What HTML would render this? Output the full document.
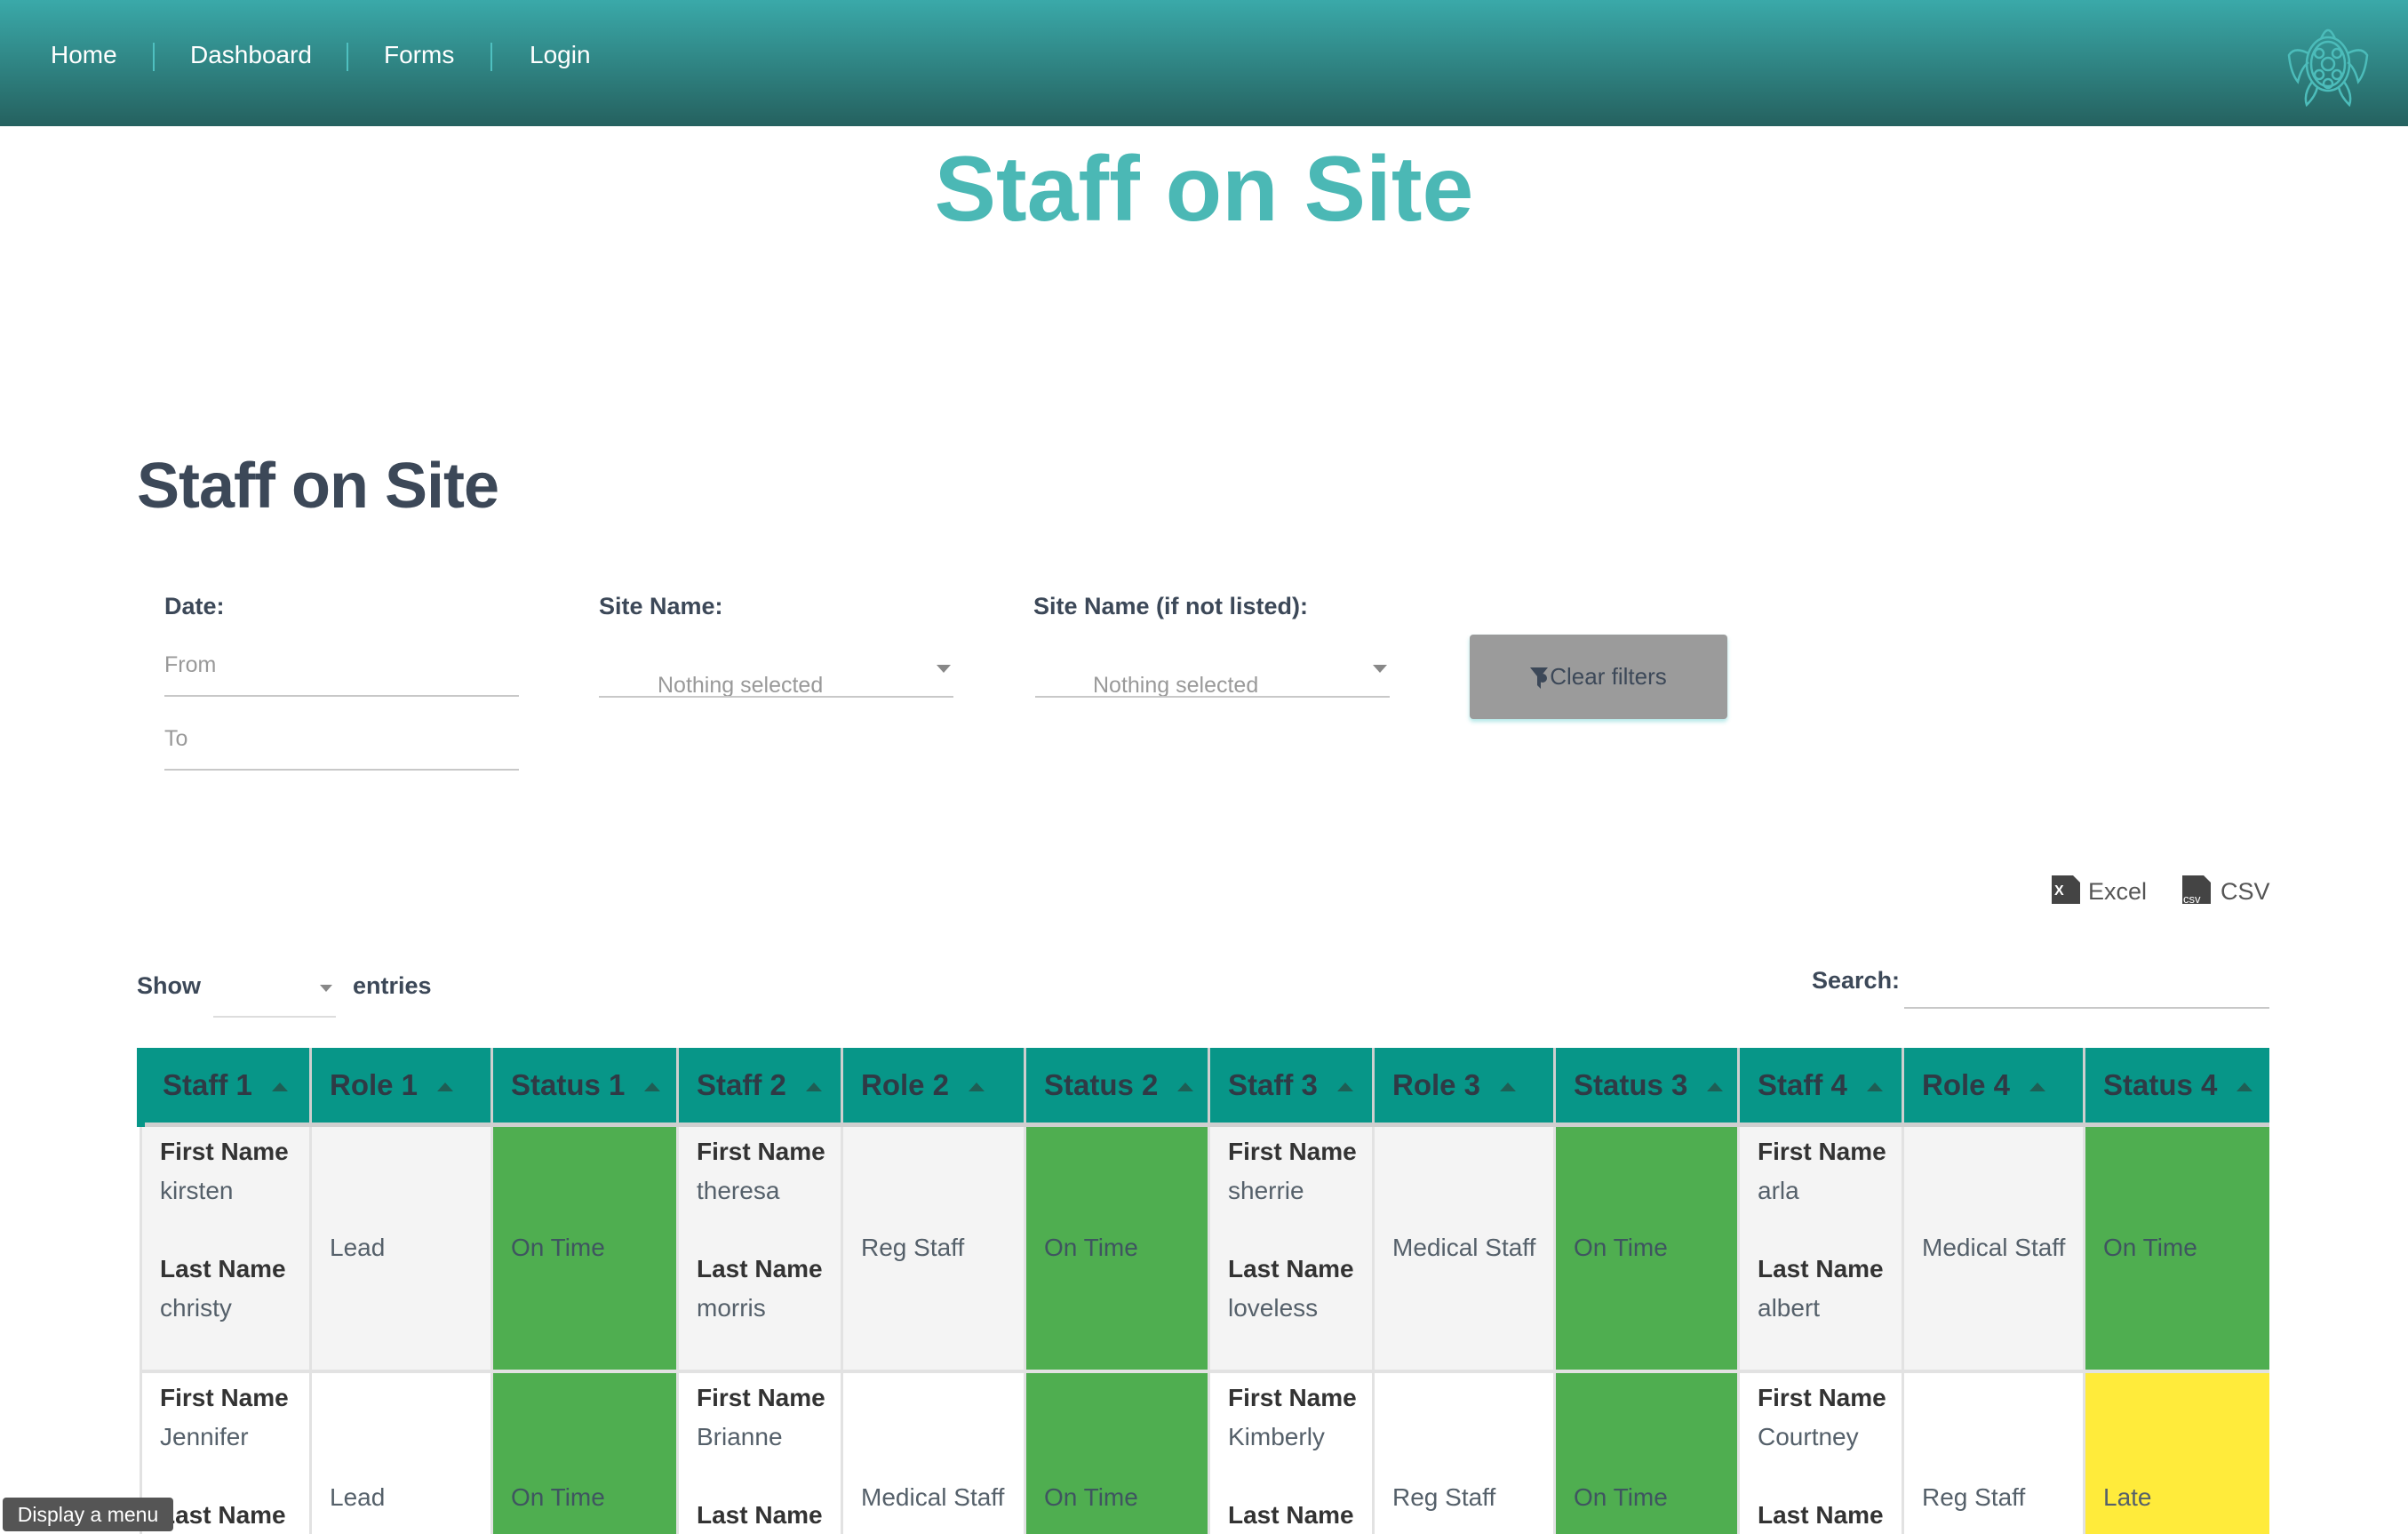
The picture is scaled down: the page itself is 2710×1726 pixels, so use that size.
<!DOCTYPE html>
<html><head><meta charset="utf-8">
<style>
*{box-sizing:border-box;margin:0;padding:0}
html,body{width:2710px;height:1726px;overflow:hidden;background:#fff;font-family:"Liberation Sans",sans-serif;color:#3c4858}
.a{position:absolute;white-space:nowrap}
nav{position:absolute;left:0;top:0;width:2710px;height:142px;background:linear-gradient(#3aa9a9,#25615f)}
.nl{color:#fff;font-size:28px;top:46px}
.sep{position:absolute;top:48px;width:2px;height:32px;background:#4fc0c0}
.lbl{font-size:27px;font-weight:bold;color:#3c4858}
.ph{font-size:25px;color:#999}
.line{position:absolute;height:2px;background:#c8c8c8}
.wrap{position:absolute;left:154px;top:1179px;width:2400px;height:547px;overflow:hidden}
table{border-collapse:collapse;table-layout:fixed;width:2400px}
th{background:#079688;height:86px;text-align:left;padding-left:20px;font-size:33px;color:#2f3a45;border-left:3px solid #cfcfcf;border-bottom:5px solid #cfcfcf;white-space:nowrap}
th span{display:inline-block;width:0;height:0;border-left:9px solid transparent;border-right:9px solid transparent;border-bottom:10px solid #1f5e55;margin-left:22px;vertical-align:middle}
td{height:278px;font-size:28px;color:#55606a;padding-left:20px;border-left:3px solid #e2e2e2;border-bottom:4px solid #e2e2e2;vertical-align:middle;white-space:nowrap}
tr.r1 td{background:#f4f4f4}
tr.r2 td{height:183px;border-bottom:0;vertical-align:top;padding-top:124px}
tr.r2 td.n{padding-top:6px}
td.g{background:#4fae50!important;color:#3f5560}
td.y{background:#ffeb3b!important}
td.n{vertical-align:top;padding-top:6px;line-height:44px}
td.n b{color:#333;display:block}
td.n i{font-style:normal;display:block;margin-bottom:44px}
</style></head><body>
<nav>
<div class="a nl" style="left:57px">Home</div>
<div class="sep" style="left:172px"></div>
<div class="a nl" style="left:214px">Dashboard</div>
<div class="sep" style="left:390px"></div>
<div class="a nl" style="left:432px">Forms</div>
<div class="sep" style="left:552px"></div>
<div class="a nl" style="left:596px">Login</div>
<svg class="a" style="left:2572px;top:22px" width="96" height="98" viewBox="0 0 96 98" fill="none" stroke="#4cbcba" stroke-width="2.5">
<ellipse cx="48" cy="50" rx="24" ry="30"/><ellipse cx="48" cy="50" rx="19" ry="25"/>
<path d="M40 22 Q48 2 56 22"/><path d="M26 38 Q10 30 4 40 Q6 60 14 70 Q18 54 26 48"/><path d="M70 38 Q86 30 92 40 Q90 60 82 70 Q78 54 70 48"/>
<path d="M30 70 Q20 84 24 96 Q34 86 36 76"/><path d="M66 70 Q76 84 72 96 Q62 86 60 76"/>
<circle cx="48" cy="50" r="7"/><circle cx="38" cy="38" r="5"/><circle cx="58" cy="38" r="5"/><circle cx="38" cy="62" r="5"/><circle cx="58" cy="62" r="5"/><circle cx="48" cy="72" r="5"/>
</svg>
</nav>
<div class="a" style="left:0;width:2710px;text-align:center;top:154px;font-size:104px;font-weight:bold;color:#4bb8b5">Staff on Site</div>
<div class="a" style="left:154px;top:506px;font-size:72px;font-weight:bold;color:#3c4858;letter-spacing:-1px">Staff on Site</div>

<div class="a lbl" style="left:185px;top:667px">Date:</div>
<div class="a lbl" style="left:674px;top:667px">Site Name:</div>
<div class="a lbl" style="left:1163px;top:667px">Site Name (if not listed):</div>
<div class="a ph" style="left:185px;top:734px">From</div>
<div class="line" style="left:185px;top:782px;width:399px"></div>
<div class="a ph" style="left:185px;top:817px">To</div>
<div class="line" style="left:185px;top:865px;width:399px"></div>
<div class="a ph" style="left:740px;top:757px">Nothing selected</div>
<div class="line" style="left:674px;top:783px;width:399px"></div>
<div class="a" style="left:1054px;top:748px;border-left:8px solid transparent;border-right:8px solid transparent;border-top:9px solid #888"></div>
<div class="a ph" style="left:1230px;top:757px">Nothing selected</div>
<div class="line" style="left:1165px;top:783px;width:399px"></div>
<div class="a" style="left:1545px;top:748px;border-left:8px solid transparent;border-right:8px solid transparent;border-top:9px solid #888"></div>
<div class="a" style="left:1654px;top:714px;width:290px;height:95px;background:#9b9b9b;border-radius:4px;box-shadow:0 3px 5px rgba(80,200,200,.45);font-size:26px;color:#3c4858;text-align:center;line-height:95px">
<svg width="22" height="24" viewBox="0 0 22 24" style="vertical-align:middle"><path d="M0 0H20L12 10V24L8 20V10Z" fill="#3c4858"/><circle cx="14" cy="12" r="5" fill="#3c4858"/></svg>Clear filters</div>

<svg class="a" style="left:2309px;top:985px" width="32" height="32" viewBox="0 0 32 32"><path d="M0 0H24L32 8V32H0Z" fill="#444"/><text x="3" y="22" font-size="16" fill="#fff" font-family="Liberation Sans" font-weight="bold">X</text></svg>
<div class="a" style="left:2350px;top:988px;font-size:27px;color:#555">Excel</div>
<svg class="a" style="left:2456px;top:985px" width="32" height="32" viewBox="0 0 32 32"><path d="M0 0H24L32 8V32H0Z" fill="#444"/><text x="1" y="31" font-size="13" fill="#fff" font-family="Liberation Sans">csv</text></svg>
<div class="a" style="left:2499px;top:988px;font-size:27px;color:#555">CSV</div>

<div class="a lbl" style="left:154px;top:1094px">Show</div>
<div class="line" style="left:240px;top:1143px;width:138px;background:#ddd"></div>
<div class="a" style="left:360px;top:1108px;border-left:7px solid transparent;border-right:7px solid transparent;border-top:8px solid #888"></div>
<div class="a lbl" style="left:397px;top:1094px">entries</div>
<div class="a lbl" style="left:2039px;top:1088px">Search:</div>
<div class="line" style="left:2143px;top:1133px;width:411px"></div>

<div class="wrap">
<table>
<colgroup><col style="width:191px"><col style="width:204px"><col style="width:209px"><col style="width:185px"><col style="width:206px"><col style="width:207px"><col style="width:185px"><col style="width:204px"><col style="width:207px"><col style="width:185px"><col style="width:204px"><col style="width:213px"></colgroup>
<tr><th style="border-left:9px solid #079688">Staff 1<span></span></th><th>Role 1<span></span></th><th>Status 1<span></span></th><th>Staff 2<span></span></th><th>Role 2<span></span></th><th>Status 2<span></span></th><th>Staff 3<span></span></th><th>Role 3<span></span></th><th>Status 3<span></span></th><th>Staff 4<span></span></th><th>Role 4<span></span></th><th>Status 4<span></span></th></tr>
<tr class="r1">
<td class="n"><b>First Name</b><i>kirsten</i><b>Last Name</b><i>christy</i></td><td>Lead</td><td class="g">On Time</td>
<td class="n"><b>First Name</b><i>theresa</i><b>Last Name</b><i>morris</i></td><td>Reg Staff</td><td class="g">On Time</td>
<td class="n"><b>First Name</b><i>sherrie</i><b>Last Name</b><i>loveless</i></td><td>Medical Staff</td><td class="g">On Time</td>
<td class="n"><b>First Name</b><i>arla</i><b>Last Name</b><i>albert</i></td><td>Medical Staff</td><td class="g">On Time</td></tr>
<tr class="r2">
<td class="n"><b>First Name</b><i>Jennifer</i><b>Last Name</b></td><td>Lead</td><td class="g">On Time</td>
<td class="n"><b>First Name</b><i>Brianne</i><b>Last Name</b></td><td>Medical Staff</td><td class="g">On Time</td>
<td class="n"><b>First Name</b><i>Kimberly</i><b>Last Name</b></td><td>Reg Staff</td><td class="g">On Time</td>
<td class="n"><b>First Name</b><i>Courtney</i><b>Last Name</b></td><td>Reg Staff</td><td class="y">Late</td></tr>
</table>
</div>
<div class="a" style="left:3px;top:1685px;width:192px;height:38px;background:#555;color:#fff;font-size:23px;line-height:38px;text-align:center;border-radius:4px">Display a menu</div>
</body></html>
